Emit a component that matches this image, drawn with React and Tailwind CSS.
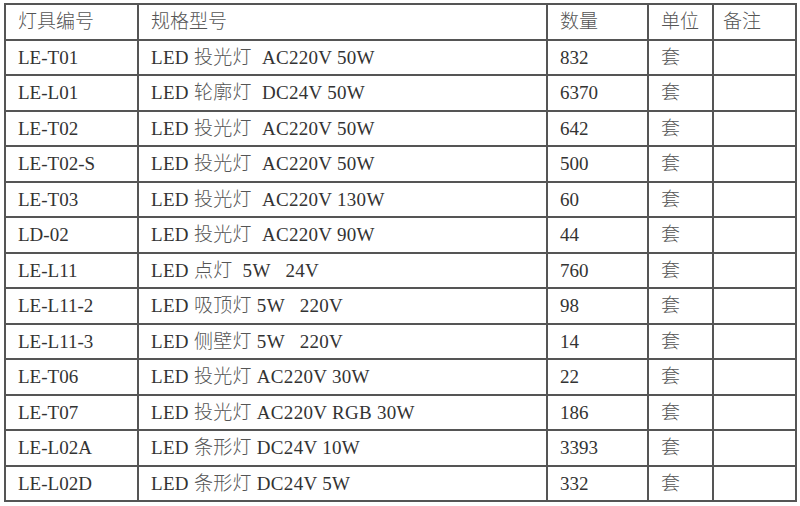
const rows = [
  ["LE-T01", "LED 投光灯  AC220V 50W", "832"],
  ["LE-L01", "LED 轮廓灯  DC24V 50W", "6370"],
  ["LE-T02", "LED 投光灯  AC220V 50W", "642"],
  ["LE-T02-S", "LED 投光灯  AC220V 50W", "500"],
  ["LE-T03", "LED 投光灯  AC220V 130W", "60"],
  ["LD-02", "LED 投光灯  AC220V 90W", "44"],
  ["LE-L11", "LED 点灯  5W   24V", "760"],
  ["LE-L11-2", "LED 吸顶灯 5W   220V", "98"],
  ["LE-L11-3", "LED 侧壁灯 5W   220V", "14"],
  ["LE-T06", "LED 投光灯 AC220V 30W", "22"],
  ["LE-T07", "LED 投光灯 AC220V RGB 30W", "186"],
  ["LE-L02A", "LED 条形灯 DC24V 10W", "3393"],
  ["LE-L02D", "LED 条形灯 DC24V 5W", "332"],
];

const cell = "border-2 border-[#555] px-[12px] align-middle whitespace-pre";

// CJK runs are drawn lighter, like the thin song-style glyphs in the original
function Mixed({ text }) {
  return text.split(/([\u4e00-\u9fff]+)/).map((part, i) =>
    /[\u4e00-\u9fff]/.test(part) ? (
      <span key={i} className="text-[#555] font-light">{part}</span>
    ) : (
      part
    )
  );
}

export default function App() {
  return (
    <div className="w-[800px] h-[506px] bg-white pt-[3px] pl-[4px] font-['Liberation_Serif','Noto_Sans_CJK_SC',serif] text-[19px] leading-none text-[#333]">
      <table className="table-fixed border-collapse w-[791px]">
        <colgroup>
          <col className="w-[133px]" />
          <col className="w-[409px]" />
          <col className="w-[101px]" />
          <col className="w-[65px]" />
          <col className="w-[83px]" />
        </colgroup>
        <thead>
          <tr className="h-[35.5px]">
            <td className={cell}><Mixed text="灯具编号" /></td>
            <td className={cell}><Mixed text="规格型号" /></td>
            <td className={cell}><Mixed text="数量" /></td>
            <td className={cell}><Mixed text="单位" /></td>
            <td className={cell + " pl-[9px]"}><Mixed text="备注" /></td>
          </tr>
        </thead>
        <tbody>
          {rows.map((r) => (
            <tr key={r[0]} className="h-[35.5px]">
              <td className={cell}>{r[0]}</td>
              <td className={cell + " tracking-[0.3px]"}><Mixed text={r[1]} /></td>
              <td className={cell}>{r[2]}</td>
              <td className={cell}><Mixed text="套" /></td>
              <td className={cell}></td>
            </tr>
          ))}
        </tbody>
      </table>
    </div>
  );
}
